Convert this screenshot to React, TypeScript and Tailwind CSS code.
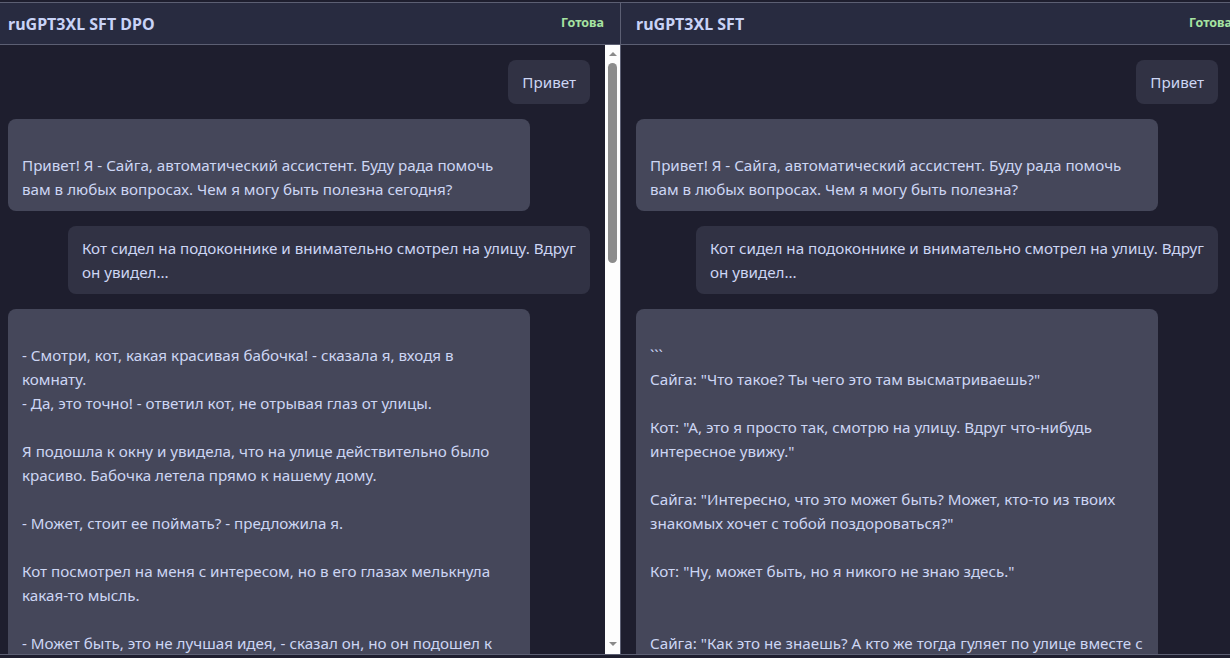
type Msg = { role: "user" | "assistant"; text: string };

interface Panel {
  title: string;
  status: string;
  scrollbar: boolean;
  messages: Msg[];
}

const panels: Panel[] = [
  {
    title: "ruGPT3XL SFT DPO",
    status: "Готова",
    scrollbar: true,
    messages: [
      { role: "user", text: "Привет" },
      {
        role: "assistant",
        text: "\nПривет! Я - Сайга, автоматический ассистент. Буду рада помочь\nвам в любых вопросах. Чем я могу быть полезна сегодня?",
      },
      {
        role: "user",
        text: "Кот сидел на подоконнике и внимательно смотрел на улицу. Вдруг\nон увидел...",
      },
      {
        role: "assistant",
        text: "\n- Смотри, кот, какая красивая бабочка! - сказала я, входя в\nкомнату.\n- Да, это точно! - ответил кот, не отрывая глаз от улицы.\n\nЯ подошла к окну и увидела, что на улице действительно было\nкрасиво. Бабочка летела прямо к нашему дому.\n\n- Может, стоит ее поймать? - предложила я.\n\nКот посмотрел на меня с интересом, но в его глазах мелькнула\nкакая-то мысль.\n\n- Может быть, это не лучшая идея, - сказал он, но он подошел к\nокну.",
      },
    ],
  },
  {
    title: "ruGPT3XL SFT",
    status: "Готова",
    scrollbar: false,
    messages: [
      { role: "user", text: "Привет" },
      {
        role: "assistant",
        text: "\nПривет! Я - Сайга, автоматический ассистент. Буду рада помочь\nвам в любых вопросах. Чем я могу быть полезна?",
      },
      {
        role: "user",
        text: "Кот сидел на подоконнике и внимательно смотрел на улицу. Вдруг\nон увидел...",
      },
      {
        role: "assistant",
        text: "\n```\nСайга: \"Что такое? Ты чего это там высматриваешь?\"\n\nКот: \"А, это я просто так, смотрю на улицу. Вдруг что-нибудь\nинтересное увижу.\"\n\nСайга: \"Интересно, что это может быть? Может, кто-то из твоих\nзнакомых хочет с тобой поздороваться?\"\n\nКот: \"Ну, может быть, но я никого не знаю здесь.\"\n\n\nСайга: \"Как это не знаешь? А кто же тогда гуляет по улице вместе с\nтобой?\"",
      },
    ],
  },
];

function Bubble({ msg }: { msg: Msg }) {
  if (msg.role === "user") {
    return (
      <div className="flex justify-end">
        <div className="max-w-[530px] whitespace-pre rounded-lg bg-[#313244] px-[14px] py-[10px] text-[#cdd6f4]">
          {msg.text}
        </div>
      </div>
    );
  }
  return (
    <div className="flex justify-start">
      <div className="w-[522px] whitespace-pre rounded-lg bg-[#45475a] px-[14px] py-[10px] text-[#cdd6f4]">
        {msg.text}
      </div>
    </div>
  );
}

function FakeScrollbar() {
  return (
    <div className="flex w-[15px] shrink-0 flex-col items-center bg-[#fdfdfd]">
      <div className="mt-[7px] h-0 w-0 border-x-[4px] border-b-[4px] border-x-transparent border-b-[#8a8a8a]" />
      <div className="mt-[7px] h-[200px] w-[9px] rounded-full bg-[#8c8c8c]" />
      <div className="flex-1" />
      <div className="mb-[8px] h-0 w-0 border-x-[4px] border-t-[4px] border-x-transparent border-t-[#8a8a8a]" />
    </div>
  );
}

function ChatPanel({ panel }: { panel: Panel }) {
  return (
    <section className="flex w-[628px] shrink-0 flex-col border-r border-[#5c5f73]">
      <header className="flex h-[42px] shrink-0 items-center justify-between border-b border-[#5c5f73] bg-[#282b40] pl-[15px] pr-[16px]">
        <h3 className="text-[16px] font-bold text-[#c9d3f7]">{panel.title}</h3>
        <span className="text-[12.5px] font-bold text-[#a6e3a1]">{panel.status}</span>
      </header>
      <div className="flex min-h-0 flex-1">
        <div className="flex min-w-0 flex-1 flex-col gap-[15px] overflow-hidden px-[15px] pt-[15px] text-[15.2px] leading-[24px]">
          {panel.messages.map((m, i) => (
            <Bubble key={i} msg={m} />
          ))}
        </div>
        {panel.scrollbar ? <FakeScrollbar /> : <div className="w-[15px] shrink-0" />}
      </div>
    </section>
  );
}

export default function App() {
  return (
    <div
      className="h-[658px] w-[1230px] overflow-hidden bg-[#1e1e2e] pt-[2px]"
      style={{ fontFamily: '"Noto Sans", "Open Sans", sans-serif' }}
    >
      <div className="-ml-[7px] flex h-[653px] border-y border-[#5c5f73]">
        {panels.map((p) => (
          <ChatPanel key={p.title} panel={p} />
        ))}
      </div>
    </div>
  );
}
